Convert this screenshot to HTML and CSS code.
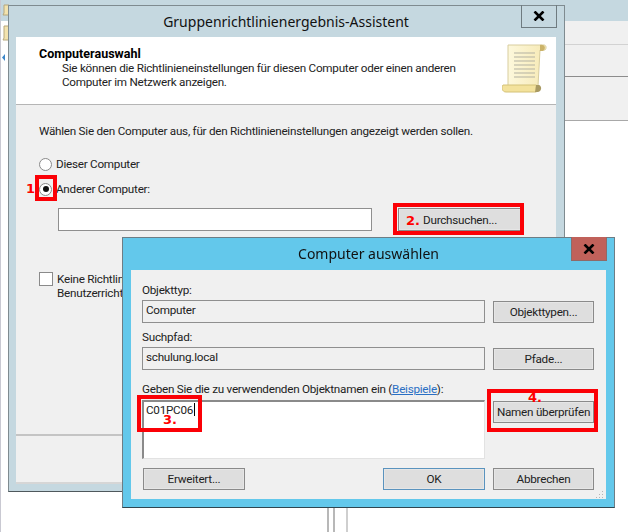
FILE: index.html
```html
<!DOCTYPE html>
<html lang="de">
<head>
<meta charset="utf-8">
<title>Computer auswählen</title>
<link rel="stylesheet" href="styles.css">
</head>
<body>
<div class="desktop">
  <div class="back-app">
    <div class="back-top"></div>
    <div class="back-band band-a"></div>
    <div class="back-band band-b"></div>
    <div class="back-band band-c"></div>
    <svg class="side-icons" width="8" height="70" viewBox="0 0 8 70"><path d="M3 5h5v10H2l1-2z" fill="#f3e3ae" stroke="#b6a77c"/><path d="M3 26h5v14H2l1-2z" fill="#f3e3ae" stroke="#b6a77c"/><path d="M4 54v7l-3-3.500z" fill="#3b86c8"/></svg>
    <div class="rule-v rv1"></div><div class="rule-v rv2"></div><div class="rule-v rv3"></div>
  </div>

  <section class="window wizard">
    <header class="titlebar wizard-title">Gruppenrichtlinienergebnis-Assistent
      <span class="close close-plain"><svg width="12" height="10" viewBox="0 0 12 10"><path d="M1.500 .5l9 9M10.500 .5l-9 9" stroke="#000" stroke-width="2.600"/></svg></span>
    </header>
    <div class="panel">
      <div class="wiz-head">
        <div class="wiz-head-text">
          <h1>Computerauswahl</h1>
          <p>Sie können die Richtlinieneinstellungen für diesen Computer oder einen anderen<br>Computer im Netzwerk anzeigen.</p>
        </div>
        <svg class="scroll" width="46" height="50" viewBox="0 0 46 50">
          <defs><linearGradient id="paper" x1="0" x2="1"><stop offset="0" stop-color="#fdf8dc"/><stop offset="1" stop-color="#f6e9b4"/></linearGradient></defs>
          <path d="M6 1h36c2 0 3 3 1 5h-5l-2 36H6z" fill="url(#paper)" stroke="#d8cd9e"/>
          <path d="M38 1c4-1 7 3 3 6h-3z" fill="#cbb36a"/>
          <path d="M1 41h33c2 0 2 7 0 7H4c-4 0-5-5-3-7z" fill="#f3e29c" stroke="#d4c278"/>
          <path d="M34 41h3c3 1 3 6-1 7h-3z" fill="#a99a62"/>
          <path d="M12 9h21M12 13h21M12 17h21M12 21h21M12 25h21M12 29h21M12 33h21" stroke="#b3b1a2" stroke-width="1"/>
        </svg>
      </div>
      <div class="wiz-body">
        <p class="lead">Wählen Sie den Computer aus, für den Richtlinieneinstellungen angezeigt werden sollen.</p>
        <label class="choice first"><span class="radio"></span>Dieser Computer</label>
        <label class="choice second"><span class="radio on"></span>Anderer Computer:</label>
        <div class="pick-row">
          <div class="field white"></div>
          <button class="btn browse">Durchsuchen...</button>
        </div>
        <label class="check-row"><span class="check"></span><span>Keine Richtlinieneinstellungen anzeigen<br>Benutzerrichtlinien</span></label>
      </div>
      <div class="wiz-foot"></div>
    </div>
  </section>

  <section class="window picker">
    <header class="titlebar picker-title">Computer auswählen
      <span class="close close-red"><svg width="12" height="10" viewBox="0 0 12 10"><path d="M1.500 .5l9 9M10.500 .5l-9 9" stroke="#000" stroke-width="2.600"/></svg></span>
    </header>
    <div class="picker-panel">
      <div class="lbl">Objekttyp:</div>
      <div class="form-row">
        <div class="field">Computer</div>
        <button class="btn side">Objekttypen...</button>
      </div>
      <div class="lbl lbl-path">Suchpfad:</div>
      <div class="form-row">
        <div class="field">schulung.local</div>
        <button class="btn side">Pfade...</button>
      </div>
      <div class="lbl lbl-names">Geben Sie die zu verwendenden Objektnamen ein (<a href="#">Beispiele</a>):</div>
      <div class="form-row names">
        <div class="area">C01PC06<span class="caret"></span></div>
        <button class="btn side">Namen überprüfen</button>
      </div>
      <div class="actions">
        <button class="btn wide">Erweitert...</button>
        <div class="actions-end">
          <button class="btn wide primary">OK</button>
          <button class="btn side">Abbrechen</button>
        </div>
      </div>
      <svg class="grip" width="9" height="9" viewBox="0 0 9 9"><path d="M7 1h1v1H7zM4 4h1v1H4zM7 4h1v1H7zM1 7h1v1H1zM4 7h1v1H4zM7 7h1v1H7z" fill="#b5b5b5"/></svg>
    </div>
  </section>

  <div class="mark m1"></div><span class="num n1">1</span>
  <div class="mark m2"></div><span class="num n2">2.</span>
  <div class="mark m3"></div><span class="num n3">3.</span>
  <div class="mark m4"></div><span class="num n4">4.</span>
</div>
</body>
</html>
```
FILE: styles.css
```css
* { box-sizing: border-box; }
html, body { margin: 0; padding: 0; background: #fff; }
.desktop {
  position: relative;
  width: 628px;
  height: 532px;
  overflow: hidden;
  font: 11.7px/16px Roboto, "Noto Sans", sans-serif;
  letter-spacing: -0.25px;
  color: #222;
  filter: blur(0.35px);
}
.back-app { position: absolute; inset: 0; border-left: 1px solid #c9c9d2; }
.back-top { position: absolute; left: 0; right: 0; top: 0; height: 21px; background: #c5d8e0; }
.back-band { position: absolute; left: 540px; right: 0; background: #f0f0f0; }
.band-a { top: 21px; height: 24px; border-bottom: 1px solid #d2d2d2; }
.band-b { top: 45px; height: 32px; border-bottom: 1px solid #8c8c8c; }
.band-c { top: 77px; height: 44px; border-bottom: 1px solid #a8a8a8; }
.side-icons { position: absolute; left: 0; top: 0; }
.rule-v { position: absolute; top: 500px; bottom: 0; width: 2px; background: #b8b8b8; }
.rv1 { left: 326px; }
.rv2 { left: 332px; }
.rv3 { left: 345px; background: #cfcfcf; }

.window { position: absolute; display: flex; flex-direction: column; }
.wizard {
  left: 8px; top: 5px; width: 557px; height: 487px;
  background: #c5d8e0;
  border: 1px solid #7f8b90;
  border-bottom-color: #4f585c;
  padding: 0 8px 7px 7px;
}
.picker {
  left: 122px; top: 237px; width: 493px; height: 271px;
  background: #63c8eb;
  border: 1px solid #6d7d85;
  border-bottom-color: #2f4650;
  padding: 0 8px 8px 8px;
}
.titlebar {
  position: relative;
  display: flex;
  align-items: center;
  justify-content: center;
  flex: none;
  font: 14px/18px "Noto Sans", sans-serif;
  letter-spacing: 0;
  color: #111;
}
.wizard-title { height: 31px; padding-top: 1px; }
.picker-title { height: 32px; }
.close {
  position: absolute;
  top: -1px;
  display: flex;
  align-items: center;
  justify-content: center;
}
.close-plain { right: -1px; width: 36px; height: 23px; border: 1px solid #6f7b80; border-top: 0; }
.close-red { right: -1px; width: 36px; height: 24px; background: #c0615a; border: 1px solid #8f6a68; border-top: 0; }

.panel { flex: 1; display: flex; flex-direction: column; background: #f0f0f0; }
.wiz-head {
  flex: none; height: 68px;
  display: flex; justify-content: space-between;
  background: #fff;
  border-bottom: 1px solid #b5b5b5;
  padding: 7px 8px 0 23px;
}
.wiz-head h1 { margin: 2px 0 0; font-size: 12.5px; line-height: 15px; font-weight: 700; letter-spacing: 0; color: #000; }
.wiz-head p { margin: 0 0 0 23px; line-height: 14px; white-space: nowrap; }
.wiz-body { flex: 1; padding: 18px 0 0 23px; border-bottom: 2px solid #c4c4c4; }
.lead { margin: 0; line-height: 16px; white-space: nowrap; }
.choice { display: flex; align-items: center; height: 16px; }
.first { margin-top: 17px; }
.second { margin-top: 9px; }
.radio {
  flex: none;
  width: 13px; height: 13px;
  margin-right: 4px;
  border: 1px solid #8a8a8a;
  border-radius: 50%;
  background: #fff;
  display: flex; align-items: center; justify-content: center;
}
.radio.on::after { content: ""; width: 6px; height: 6px; border-radius: 50%; background: #111; }
.pick-row { display: flex; gap: 26px; margin: 11px 0 0 19px; }
.field {
  width: 343px; height: 23px;
  background: #f0f0f0;
  border: 1px solid #8f8f8f;
  padding: 1px 2px 0 3px;
  white-space: nowrap;
}
.field.white { width: 314px; background: #fff; }
.btn {
  height: 22px;
  padding: 0;
  font: inherit;
  letter-spacing: inherit;
  white-space: nowrap;
  color: #222;
  background: #dedede;
  border: 1px solid #8a8a8a;
  box-shadow: inset 0 0 0 1px #e6e6e6;
}
.browse { width: 124px; height: 23px; }
.check-row { display: flex; gap: 4px; margin-top: 41px; line-height: 14px; white-space: nowrap; }
.check { flex: none; width: 14px; height: 14px; background: #fff; border: 1px solid #8a8a8a; }
.wiz-foot { flex: none; height: 48px; border-bottom: 2px solid #d6d6d6; }

.picker-panel {
  position: relative;
  flex: 1;
  background: #f0f0f0;
  padding: 12px 12px 0 11px;
}
.lbl { height: 16px; line-height: 16px; }
.lbl-path { margin-top: 6px; }
.lbl-names { margin-top: 11px; }
.lbl a { color: #2a6fc4; }
.form-row { display: flex; justify-content: space-between; align-items: flex-start; margin-top: 2px; }
.form-row .side { margin-top: 1px; }
.side { width: 101px; flex: none; }
.area {
  width: 343px; height: 59px;
  background: #fff;
  border: 1px solid #e2e2e2;
  border-top: 2px solid #8a8a8a;
  border-left: 2px solid #8a8a8a;
  padding: 0 2px 0 2px;
}
.caret { display: inline-block; width: 1px; height: 13px; margin-left: 1px; background: #000; vertical-align: -2px; }
.names { margin-top: 3px; }
.actions { display: flex; justify-content: space-between; margin: 9px 0 0 1px; }
.actions-end { display: flex; gap: 8px; }
.wide { width: 102px; }
.primary { border-color: #5a93be; }
.grip { position: absolute; right: 2px; bottom: 0; }

.mark { position: absolute; border: 4px solid #fb0006; }
.m1 { left: 35px; top: 175px; width: 22px; height: 26px; }
.m2 { left: 393px; top: 203px; width: 131px; height: 32px; }
.m3 { left: 137px; top: 395px; width: 65px; height: 37px; }
.m4 { left: 487px; top: 389px; width: 111px; height: 43px; }
.num { position: absolute; color: #f00; font: 700 13px/14px "DejaVu Sans", sans-serif; letter-spacing: 0; }
.n1 { left: 26px; top: 182px; }
.n2 { left: 406px; top: 214px; }
.n3 { left: 163px; top: 413px; }
.n4 { left: 528px; top: 391px; }
```
